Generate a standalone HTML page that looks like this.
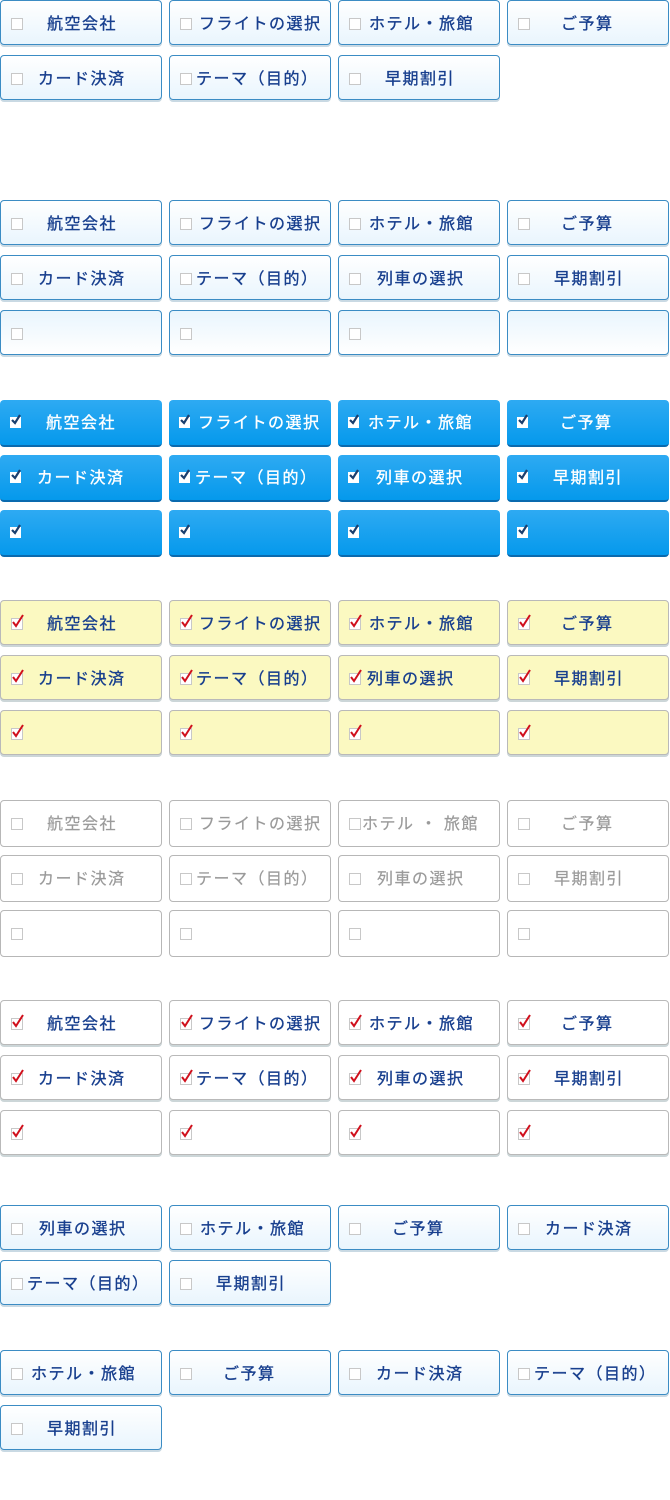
<!DOCTYPE html>
<html><head><meta charset="utf-8">
<style>
*{margin:0;padding:0;box-sizing:border-box}
body{width:670px;height:1500px;background:#fff;position:relative;overflow:hidden;font-family:"Liberation Sans","Noto Sans CJK JP",sans-serif}
.bt{position:absolute;width:162px;height:45px;border-radius:4px;border:1px solid #3b8cc4;background:linear-gradient(#ffffff,#e9f5fd);box-shadow:0 2px 0 #c9d9e3}
.bt.n2{background:linear-gradient(#e9f5fd,#ffffff)}
.bt.b{border:none;height:47px;background:linear-gradient(#2eaaf2,#0599ec);box-shadow:none;border-bottom:2px solid #0a6aae}
.bt.y{border:1px solid #b9b9b9;background:#fbf9c1;box-shadow:0 2px 0 #ccd6d8}
.bt.d{border:1px solid #b7b7b7;background:#fff;box-shadow:none;height:47px}
.bt.w{border:1px solid #b9b9b9;background:#fff;box-shadow:0 2px 0 #ccd6d8}
.t{position:absolute;top:1px;line-height:45px;font-size:16px;letter-spacing:1.5px;color:#183f8e;white-space:nowrap;-webkit-text-stroke:0.35px #183f8e}
.b .t{color:#fff;line-height:46px;-webkit-text-stroke:0.35px #fff}
.d .t{color:#9a9a9a;line-height:45px;-webkit-text-stroke:0.2px #9a9a9a}
.cb{position:absolute;left:10px;top:17px;width:12px;height:12px;border:1px solid #c8c8c8;background:#fff}
.b .cb{border:none;background:#fff;left:10px;top:17px;width:11px;height:11px}
.cb svg{position:absolute;left:0;top:-5px;overflow:visible}
.a{left:46px}.f{left:29px}.h{left:30px}.g{left:53px}.c{left:37px}.tt{left:26px}.s{left:46px}.r{left:38px}
.d .h{left:23px}
</style></head><body>
<div class="bt" style="left:0;top:0"><i class="cb"></i><span class="t a">航空会社</span></div>
<div class="bt" style="left:169px;top:0"><i class="cb"></i><span class="t f">フライトの選択</span></div>
<div class="bt" style="left:338px;top:0"><i class="cb"></i><span class="t h">ホテル・旅館</span></div>
<div class="bt" style="left:507px;top:0"><i class="cb"></i><span class="t g">ご予算</span></div>
<div class="bt" style="left:0;top:55px"><i class="cb"></i><span class="t c">カード決済</span></div>
<div class="bt" style="left:169px;top:55px"><i class="cb"></i><span class="t tt">テーマ（目的）</span></div>
<div class="bt" style="left:338px;top:55px"><i class="cb"></i><span class="t s">早期割引</span></div>

<div class="bt" style="left:0;top:200px"><i class="cb"></i><span class="t a">航空会社</span></div>
<div class="bt" style="left:169px;top:200px"><i class="cb"></i><span class="t f">フライトの選択</span></div>
<div class="bt" style="left:338px;top:200px"><i class="cb"></i><span class="t h">ホテル・旅館</span></div>
<div class="bt" style="left:507px;top:200px"><i class="cb"></i><span class="t g">ご予算</span></div>
<div class="bt" style="left:0;top:255px"><i class="cb"></i><span class="t c">カード決済</span></div>
<div class="bt" style="left:169px;top:255px"><i class="cb"></i><span class="t tt">テーマ（目的）</span></div>
<div class="bt" style="left:338px;top:255px"><i class="cb"></i><span class="t r">列車の選択</span></div>
<div class="bt" style="left:507px;top:255px"><i class="cb"></i><span class="t s">早期割引</span></div>
<div class="bt n2" style="left:0;top:310px"><i class="cb"></i></div>
<div class="bt n2" style="left:169px;top:310px"><i class="cb"></i></div>
<div class="bt n2" style="left:338px;top:310px"><i class="cb"></i></div>
<div class="bt n2" style="left:507px;top:310px"></div>

<div class="bt b" style="left:0;top:400px"><i class="cb"><svg width="13" height="14"><path d="M2 8 L5 11 L10 3" stroke="#1b3f6e" stroke-width="2.2" fill="none"/></svg></i><span class="t a">航空会社</span></div>
<div class="bt b" style="left:169px;top:400px"><i class="cb"><svg width="13" height="14"><path d="M2 8 L5 11 L10 3" stroke="#1b3f6e" stroke-width="2.2" fill="none"/></svg></i><span class="t f">フライトの選択</span></div>
<div class="bt b" style="left:338px;top:400px"><i class="cb"><svg width="13" height="14"><path d="M2 8 L5 11 L10 3" stroke="#1b3f6e" stroke-width="2.2" fill="none"/></svg></i><span class="t h">ホテル・旅館</span></div>
<div class="bt b" style="left:507px;top:400px"><i class="cb"><svg width="13" height="14"><path d="M2 8 L5 11 L10 3" stroke="#1b3f6e" stroke-width="2.2" fill="none"/></svg></i><span class="t g">ご予算</span></div>
<div class="bt b" style="left:0;top:455px"><i class="cb"><svg width="13" height="14"><path d="M2 8 L5 11 L10 3" stroke="#1b3f6e" stroke-width="2.2" fill="none"/></svg></i><span class="t c">カード決済</span></div>
<div class="bt b" style="left:169px;top:455px"><i class="cb"><svg width="13" height="14"><path d="M2 8 L5 11 L10 3" stroke="#1b3f6e" stroke-width="2.2" fill="none"/></svg></i><span class="t tt">テーマ（目的）</span></div>
<div class="bt b" style="left:338px;top:455px"><i class="cb"><svg width="13" height="14"><path d="M2 8 L5 11 L10 3" stroke="#1b3f6e" stroke-width="2.2" fill="none"/></svg></i><span class="t r">列車の選択</span></div>
<div class="bt b" style="left:507px;top:455px"><i class="cb"><svg width="13" height="14"><path d="M2 8 L5 11 L10 3" stroke="#1b3f6e" stroke-width="2.2" fill="none"/></svg></i><span class="t s">早期割引</span></div>
<div class="bt b" style="left:0;top:510px"><i class="cb"><svg width="13" height="14"><path d="M2 8 L5 11 L10 3" stroke="#1b3f6e" stroke-width="2.2" fill="none"/></svg></i></div>
<div class="bt b" style="left:169px;top:510px"><i class="cb"><svg width="13" height="14"><path d="M2 8 L5 11 L10 3" stroke="#1b3f6e" stroke-width="2.2" fill="none"/></svg></i></div>
<div class="bt b" style="left:338px;top:510px"><i class="cb"><svg width="13" height="14"><path d="M2 8 L5 11 L10 3" stroke="#1b3f6e" stroke-width="2.2" fill="none"/></svg></i></div>
<div class="bt b" style="left:507px;top:510px"><i class="cb"><svg width="13" height="14"><path d="M2 8 L5 11 L10 3" stroke="#1b3f6e" stroke-width="2.2" fill="none"/></svg></i></div>

<div class="bt y" style="left:0;top:600px"><i class="cb"><svg width="13" height="14"><path d="M1 8 L4 12 L11 1" stroke="#d0101c" stroke-width="2" fill="none"/></svg></i><span class="t a">航空会社</span></div>
<div class="bt y" style="left:169px;top:600px"><i class="cb"><svg width="13" height="14"><path d="M1 8 L4 12 L11 1" stroke="#d0101c" stroke-width="2" fill="none"/></svg></i><span class="t f">フライトの選択</span></div>
<div class="bt y" style="left:338px;top:600px"><i class="cb"><svg width="13" height="14"><path d="M1 8 L4 12 L11 1" stroke="#d0101c" stroke-width="2" fill="none"/></svg></i><span class="t h">ホテル・旅館</span></div>
<div class="bt y" style="left:507px;top:600px"><i class="cb"><svg width="13" height="14"><path d="M1 8 L4 12 L11 1" stroke="#d0101c" stroke-width="2" fill="none"/></svg></i><span class="t g">ご予算</span></div>
<div class="bt y" style="left:0;top:655px"><i class="cb"><svg width="13" height="14"><path d="M1 8 L4 12 L11 1" stroke="#d0101c" stroke-width="2" fill="none"/></svg></i><span class="t c">カード決済</span></div>
<div class="bt y" style="left:169px;top:655px"><i class="cb"><svg width="13" height="14"><path d="M1 8 L4 12 L11 1" stroke="#d0101c" stroke-width="2" fill="none"/></svg></i><span class="t tt">テーマ（目的）</span></div>
<div class="bt y" style="left:338px;top:655px"><i class="cb"><svg width="13" height="14"><path d="M1 8 L4 12 L11 1" stroke="#d0101c" stroke-width="2" fill="none"/></svg></i><span class="t" style="left:28px">列車の選択</span></div>
<div class="bt y" style="left:507px;top:655px"><i class="cb"><svg width="13" height="14"><path d="M1 8 L4 12 L11 1" stroke="#d0101c" stroke-width="2" fill="none"/></svg></i><span class="t s">早期割引</span></div>
<div class="bt y" style="left:0;top:710px"><i class="cb"><svg width="13" height="14"><path d="M1 8 L4 12 L11 1" stroke="#d0101c" stroke-width="2" fill="none"/></svg></i></div>
<div class="bt y" style="left:169px;top:710px"><i class="cb"><svg width="13" height="14"><path d="M1 8 L4 12 L11 1" stroke="#d0101c" stroke-width="2" fill="none"/></svg></i></div>
<div class="bt y" style="left:338px;top:710px"><i class="cb"><svg width="13" height="14"><path d="M1 8 L4 12 L11 1" stroke="#d0101c" stroke-width="2" fill="none"/></svg></i></div>
<div class="bt y" style="left:507px;top:710px"><i class="cb"><svg width="13" height="14"><path d="M1 8 L4 12 L11 1" stroke="#d0101c" stroke-width="2" fill="none"/></svg></i></div>

<div class="bt d" style="left:0;top:800px"><i class="cb"></i><span class="t a">航空会社</span></div>
<div class="bt d" style="left:169px;top:800px"><i class="cb"></i><span class="t f">フライトの選択</span></div>
<div class="bt d" style="left:338px;top:800px"><i class="cb"></i><span class="t h">ホテル ・ 旅館</span></div>
<div class="bt d" style="left:507px;top:800px"><i class="cb"></i><span class="t g">ご予算</span></div>
<div class="bt d" style="left:0;top:855px"><i class="cb"></i><span class="t c">カード決済</span></div>
<div class="bt d" style="left:169px;top:855px"><i class="cb"></i><span class="t tt">テーマ（目的）</span></div>
<div class="bt d" style="left:338px;top:855px"><i class="cb"></i><span class="t r">列車の選択</span></div>
<div class="bt d" style="left:507px;top:855px"><i class="cb"></i><span class="t s">早期割引</span></div>
<div class="bt d" style="left:0;top:910px"><i class="cb"></i></div>
<div class="bt d" style="left:169px;top:910px"><i class="cb"></i></div>
<div class="bt d" style="left:338px;top:910px"><i class="cb"></i></div>
<div class="bt d" style="left:507px;top:910px"><i class="cb"></i></div>

<div class="bt w" style="left:0;top:1000px"><i class="cb"><svg width="13" height="14"><path d="M1 8 L4 12 L11 1" stroke="#d0101c" stroke-width="2" fill="none"/></svg></i><span class="t a">航空会社</span></div>
<div class="bt w" style="left:169px;top:1000px"><i class="cb"><svg width="13" height="14"><path d="M1 8 L4 12 L11 1" stroke="#d0101c" stroke-width="2" fill="none"/></svg></i><span class="t f">フライトの選択</span></div>
<div class="bt w" style="left:338px;top:1000px"><i class="cb"><svg width="13" height="14"><path d="M1 8 L4 12 L11 1" stroke="#d0101c" stroke-width="2" fill="none"/></svg></i><span class="t h">ホテル・旅館</span></div>
<div class="bt w" style="left:507px;top:1000px"><i class="cb"><svg width="13" height="14"><path d="M1 8 L4 12 L11 1" stroke="#d0101c" stroke-width="2" fill="none"/></svg></i><span class="t g">ご予算</span></div>
<div class="bt w" style="left:0;top:1055px"><i class="cb"><svg width="13" height="14"><path d="M1 8 L4 12 L11 1" stroke="#d0101c" stroke-width="2" fill="none"/></svg></i><span class="t c">カード決済</span></div>
<div class="bt w" style="left:169px;top:1055px"><i class="cb"><svg width="13" height="14"><path d="M1 8 L4 12 L11 1" stroke="#d0101c" stroke-width="2" fill="none"/></svg></i><span class="t tt">テーマ（目的）</span></div>
<div class="bt w" style="left:338px;top:1055px"><i class="cb"><svg width="13" height="14"><path d="M1 8 L4 12 L11 1" stroke="#d0101c" stroke-width="2" fill="none"/></svg></i><span class="t r">列車の選択</span></div>
<div class="bt w" style="left:507px;top:1055px"><i class="cb"><svg width="13" height="14"><path d="M1 8 L4 12 L11 1" stroke="#d0101c" stroke-width="2" fill="none"/></svg></i><span class="t s">早期割引</span></div>
<div class="bt w" style="left:0;top:1110px"><i class="cb"><svg width="13" height="14"><path d="M1 8 L4 12 L11 1" stroke="#d0101c" stroke-width="2" fill="none"/></svg></i></div>
<div class="bt w" style="left:169px;top:1110px"><i class="cb"><svg width="13" height="14"><path d="M1 8 L4 12 L11 1" stroke="#d0101c" stroke-width="2" fill="none"/></svg></i></div>
<div class="bt w" style="left:338px;top:1110px"><i class="cb"><svg width="13" height="14"><path d="M1 8 L4 12 L11 1" stroke="#d0101c" stroke-width="2" fill="none"/></svg></i></div>
<div class="bt w" style="left:507px;top:1110px"><i class="cb"><svg width="13" height="14"><path d="M1 8 L4 12 L11 1" stroke="#d0101c" stroke-width="2" fill="none"/></svg></i></div>

<div class="bt" style="left:0;top:1205px"><i class="cb"></i><span class="t r">列車の選択</span></div>
<div class="bt" style="left:169px;top:1205px"><i class="cb"></i><span class="t h">ホテル・旅館</span></div>
<div class="bt" style="left:338px;top:1205px"><i class="cb"></i><span class="t g">ご予算</span></div>
<div class="bt" style="left:507px;top:1205px"><i class="cb"></i><span class="t c">カード決済</span></div>
<div class="bt" style="left:0;top:1260px"><i class="cb"></i><span class="t tt">テーマ（目的）</span></div>
<div class="bt" style="left:169px;top:1260px"><i class="cb"></i><span class="t s">早期割引</span></div>

<div class="bt" style="left:0;top:1350px"><i class="cb"></i><span class="t h">ホテル・旅館</span></div>
<div class="bt" style="left:169px;top:1350px"><i class="cb"></i><span class="t g">ご予算</span></div>
<div class="bt" style="left:338px;top:1350px"><i class="cb"></i><span class="t c">カード決済</span></div>
<div class="bt" style="left:507px;top:1350px"><i class="cb"></i><span class="t tt">テーマ（目的）</span></div>
<div class="bt" style="left:0;top:1405px"><i class="cb"></i><span class="t s">早期割引</span></div>
</body></html>
